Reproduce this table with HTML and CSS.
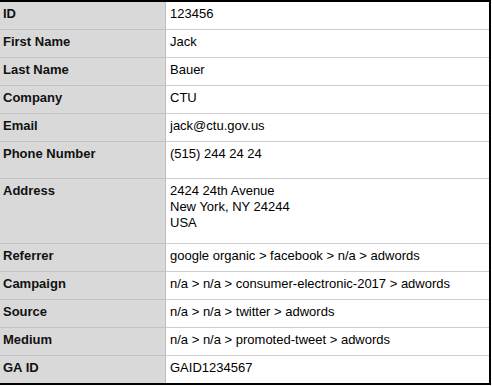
FILE: index.html
```html
<!DOCTYPE html>
<html lang="en">
<head>
    <meta charset="UTF-8">
    <meta name="viewport" content="width=device-width, initial-scale=1.0">
    <title>Contact Details</title>
    <link rel="stylesheet" href="styles.css">
</head>
<body>
    <table class="details">
        <tr><td class="label">ID</td><td class="value">123456</td></tr>
        <tr><td class="label">First Name</td><td class="value">Jack</td></tr>
        <tr><td class="label">Last Name</td><td class="value">Bauer</td></tr>
        <tr><td class="label">Company</td><td class="value">CTU</td></tr>
        <tr><td class="label">Email</td><td class="value">jack@ctu.gov.us</td></tr>
        <tr class="tall"><td class="label">Phone Number</td><td class="value">(515) 244 24 24</td></tr>
        <tr class="address"><td class="label">Address</td><td class="value">2424 24th Avenue<br>New York, NY 24244<br>USA</td></tr>
        <tr><td class="label">Referrer</td><td class="value">google organic &gt; facebook &gt; n/a &gt; adwords</td></tr>
        <tr><td class="label">Campaign</td><td class="value">n/a &gt; n/a &gt; consumer-electronic-2017 &gt; adwords</td></tr>
        <tr><td class="label">Source</td><td class="value">n/a &gt; n/a &gt; twitter &gt; adwords</td></tr>
        <tr><td class="label">Medium</td><td class="value">n/a &gt; n/a &gt; promoted-tweet &gt; adwords</td></tr>
        <tr class="last"><td class="label">GA ID</td><td class="value">GAID1234567</td></tr>
    </table>
</body>
</html>
```

FILE: styles.css
```css
body {
    margin: 0;
    background-color: #fff;
    font-family: "Liberation Sans", Arial, sans-serif;
    font-size: 13px;
    color: #111;
}
.details {
    width: 491px;
    border-collapse: separate;
    border-spacing: 0;
    border-top: 2px solid #000;
    border-right: 2px solid #000;
    border-bottom: 2px solid #000;
}
.details td {
    box-sizing: border-box;
    height: 28px;
    padding: 4px 4px 0;
    line-height: 16px;
    vertical-align: top;
    border-bottom: 1px solid #cdcdcd;
}
.details .label {
    width: 166px;
    padding-left: 3px;
    font-weight: bold;
    background-color: #d9d9d9;
    border-right: 1px solid #bcbcbc;
    border-bottom-color: #c2c2c2;
}
.details .value {
    color: #000;
}
.details tr.tall td {
    height: 37px;
}
.details tr.address td {
    height: 65px;
}
.details tr.last td {
    height: 27px;
    border-bottom: none;
}
```
